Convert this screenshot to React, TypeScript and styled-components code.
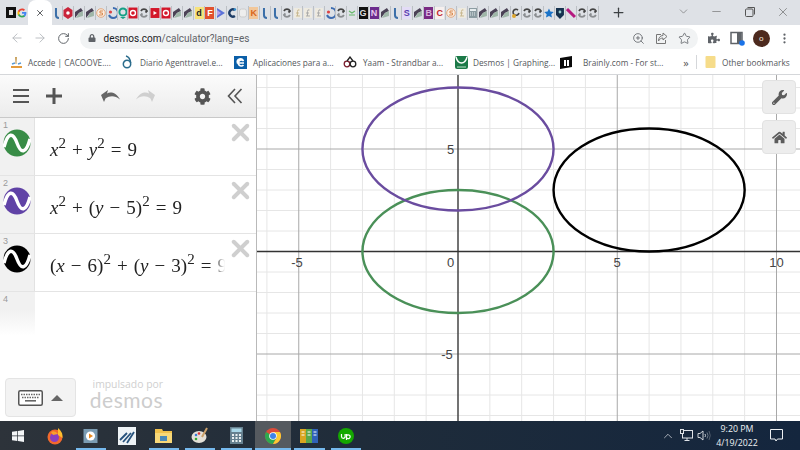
import React from "react";
import styled, { createGlobalStyle } from "styled-components";
import { ArrowLeft, ArrowRight, RotateCw, ZoomIn, Star, X, Minus, Plus, ChevronDown, ChevronUp, MoreVertical } from "lucide-react";
import { FaCog, FaWrench, FaHome, FaLock, FaPuzzlePiece } from "react-icons/fa";

const Global = createGlobalStyle`
  html, body { margin: 0; padding: 0; width: 800px; height: 450px; overflow: hidden; background: #fff; }
  * { box-sizing: border-box; }
`;

const Page = styled.div`
  width: 800px; height: 450px; display: flex; flex-direction: column;
  font-family: "Open Sans", "Liberation Sans", sans-serif; overflow: hidden;
`;

/* ---------- tab strip ---------- */
const TabStrip = styled.div`
  height: 25px; background: #dee1e6; display: flex; align-items: center; padding-left: 6px; flex: none;
`;
const FavSlot = styled.div<{ $sep?: boolean }>`
  width: 10.95px; height: 14px; flex: none; display: flex; align-items: center; justify-content: center;
  border-right: ${p => (p.$sep ? "1px solid #bcc0c5" : "none")};
`;
const ActiveTab = styled.div`
  width: 24px; height: 25px; background: #fff; border-radius: 8px 8px 0 0; display: flex;
  align-items: center; justify-content: center; color: #3c4043; flex: none; align-self: flex-end; margin-top: 0;
`;
const Badge = styled.span<{ $bg: string; $fg: string }>`
  width: 9px; height: 12px; background: ${p => p.$bg}; color: ${p => p.$fg};
  font: 700 9px/12px "Liberation Sans", sans-serif; text-align: center; display: block; overflow: hidden;
`;
const NewTab = styled.div`
  width: 24px; display: flex; justify-content: center; margin-left: 8px; color: #3c4043;
`;
const WindowControls = styled.div`
  margin-left: auto; display: flex; align-items: center; color: #5f6368; height: 100%; padding-bottom: 2px;
`;
const WinBtn = styled.div`
  width: 33.3px; display: flex; justify-content: center; color: #555;
`;

/* ---------- toolbar ---------- */
const Toolbar = styled.div`
  height: 25px; background: #fff; display: flex; align-items: center; flex: none; padding: 1px 0 0 5px;
`;
const NavBtn = styled.div<{ $off?: boolean }>`
  width: 23.5px; display: flex; justify-content: center; color: ${p => (p.$off ? "#b4b7bb" : "#5f6368")}; flex: none;
`;
const Omnibox = styled.div`
  margin-left: 4px; width: 618px; height: 21px; border-radius: 11px; background: #f1f3f4; display: flex; align-items: center;
  padding: 0 7px 0 8px; color: #5f6368; flex: none;
`;
const Url = styled.div`
  font: 400 10px "Roboto", sans-serif; color: #5f6368; margin-left: 8px;
  b { font-weight: 400; color: #202124; }
`;
const OmniActions = styled.div`
  margin-left: auto; display: flex; gap: 10px; align-items: center;
`;
const ToolbarRight = styled.div`
  display: flex; align-items: center; margin-left: 5px; color: #5f6368;
`;
const ExtBtn = styled.div`
  width: 23.5px; display: flex; justify-content: center; align-items: center;
`;
const Avatar = styled.div`
  width: 17px; height: 17px; border-radius: 50%; background: #4d2a1e; color: #f3e4da;
  font: 400 8px/17px "Roboto", sans-serif; text-align: center;
`;

/* ---------- bookmarks ---------- */
const Bookmarks = styled.div`
  height: 25px; background: #fff; border-bottom: 1px solid #d5d7da; display: flex; align-items: center; padding-left: 10px; flex: none;
`;
const Bookmark = styled.div<{ $w: number; $gap: number }>`
  width: ${p => p.$w}px; flex: none; display: flex; align-items: center; gap: ${p => p.$gap}px;
  font: 400 8.25px "Open Sans", sans-serif; color: #55585c; white-space: nowrap;
`;
const MoreMarks = styled.div`
  width: 20px; font: 400 11px "Open Sans", sans-serif; color: #555; text-align: center; flex: none; margin-left: 11px;
`;
const Sep = styled.div`
  width: 1px; height: 14px; background: #d5d7da; margin: 0 8px 0 0; flex: none;
`;

/* ---------- desmos ---------- */
const Main = styled.div`
  flex: 1; display: flex; min-height: 0;
`;
const Panel = styled.div`
  width: 257px; flex: none; background: #fff; border-right: 1px solid #b9b9b9; display: flex; flex-direction: column;
`;
const PanelHead = styled.div`
  height: 43px; flex: none; background: linear-gradient(#fbfbfb, #ececec); border-bottom: 1px solid #c9c9c9;
  display: flex; align-items: center; color: #555;
`;
const HeadBtn = styled.div<{ $w: number; $pad?: number }>`
  width: ${p => p.$w}px; flex: none; display: flex; justify-content: center; align-items: center; color: #555;
  padding-left: ${p => p.$pad || 0}px;
`;
const Row = styled.div`
  height: 58px; flex: none; display: flex; border-bottom: 1px solid #e4e4e4;
`;
const Gutter = styled.div`
  width: 35px; flex: none; background: #f1f1f1; border-right: 1px solid #e2e2e2; display: flex; flex-direction: column;
  align-items: center; position: relative; padding-top: 11px;
`;
const RowNum = styled.span`
  position: absolute; left: 3px; top: 2px; font: 400 9px "Liberation Sans", sans-serif; color: #9a9a9a;
`;
const MathText = styled.div`
  flex: 1; min-width: 0; overflow: hidden; white-space: nowrap; padding: 20px 0 0 15px; width: 190px;
  font: 400 19px/24px "Liberation Serif", "Times New Roman", serif; color: #222; word-spacing: 1.3px;
  -webkit-mask-image: linear-gradient(to right, #000 178px, transparent 190px);
  mask-image: linear-gradient(to right, #000 178px, transparent 190px);
  i { font-style: italic; }
  sup { font-size: 15px; line-height: 0; vertical-align: 8px; }
`;
const Close = styled.div`
  width: 30px; flex: none; padding: 1px 2px 0 0; color: #cfcfcf; display: flex; justify-content: center; align-items: flex-start;
`;
const LastRow = styled.div`
  height: 44px; flex: none; display: flex;
`;
const FadeGutter = styled(Gutter)`
  border-right-color: transparent;
  background: linear-gradient(#f1f1f1 40%, #fff);
`;
const PanelFoot = styled.div`
  margin-top: auto; display: flex; align-items: flex-start; padding: 0 0 4px 5px; gap: 14px;
`;
const KeyBtn = styled.div`
  width: 71px; height: 39px; background: #f3f3f3; border: 1px solid #e4e4e4; border-radius: 4px; display: flex;
  align-items: center; justify-content: center; gap: 8px; color: #555;
`;
const Caret = styled.span`
  width: 0; height: 0; border-left: 6px solid transparent; border-right: 6px solid transparent; border-bottom: 6px solid #666;
`;
const Powered = styled.div`
  display: flex; flex-direction: column; align-items: flex-end; width: 73px; color: #cfcfcf;
`;
const PoweredSmall = styled.span`
  font: 400 10.4px/13px "Open Sans", sans-serif; white-space: nowrap;
`;
const PoweredBig = styled.span`
  font: 400 21px/17px "Lato", sans-serif; letter-spacing: 0.5px; color: #cdcdcd;
`;
const Graph = styled.div`
  flex: 1; position: relative; min-width: 0; background: #fff; overflow: hidden;
  svg.plot { display: block; }
`;
const ToolBtn = styled.div<{ $top: number }>`
  position: absolute; right: 4px; top: ${p => p.$top}px; width: 34px; height: 34px; background: #ededed;
  border: 1px solid #e2e2e2; border-radius: 4px; display: flex; align-items: center; justify-content: center; color: #5c5c5c;
`;

/* ---------- taskbar ---------- */
const Taskbar = styled.div`
  height: 29px; flex: none; background: linear-gradient(to right, #2d333a, #1f2c3a 45%, #14263e); display: flex; align-items: stretch;
`;
const TaskSlot = styled.div<{ $active?: boolean; $open?: boolean }>`
  width: 36.4px; flex: none; position: relative; display: flex; align-items: center; justify-content: center;
  background: ${p => (p.$active ? "#555a5f" : "transparent")};
  &::after {
    content: ""; display: ${p => (p.$open ? "block" : "none")}; position: absolute; left: ${p => (p.$active ? 0 : 3)}px;
    right: ${p => (p.$active ? 0 : 3)}px; bottom: 0; height: 2px; background: #76b9ed;
  }
`;
const Tray = styled.div`
  margin-left: auto; display: flex; align-items: center; color: #dfe3e8;
`;
const TrayIcon = styled.div`
  width: 18px; display: flex; justify-content: center;
`;
const Clock = styled.div`
  width: 44px; margin-left: 2px; text-align: center; font: 400 8.8px/14px "Open Sans", sans-serif; color: #eef1f4; white-space: nowrap;
`;
const Notify = styled.div`
  width: 41px; display: flex; justify-content: center; padding-right: 7px;
`;

/* ---------- drawn icons ---------- */
const S = ({ w = 10, h = 12, children }: { w?: number; h?: number; children: React.ReactNode }) => (
  <svg width={w} height={h} viewBox={`0 0 ${w} ${h}`}>{children}</svg>
);
const Leaf = () => <S><path d="M1 11 L1 5 L7 1 L9 4 L5 6 Z" fill="#4b4256" /><path d="M5 6 L9 4 L9 9 L2 11 Z" fill="#9fb6a8" /></S>;
const Refresh = ({ c = "#444" }: { c?: string }) => <S><path d="M2 4 A3.4 3.4 0 0 1 8 4 L6.500 5.500" fill="none" stroke={c} strokeWidth="1.800" /><path d="M8 8 A3.4 3.4 0 0 1 2 8 L3.500 6.500" fill="none" stroke="#8a8d90" strokeWidth="1.800" /></S>;
const Bar = ({ c = "#3a6ea8" }: { c?: string }) => <S><path d="M4 1 v7 q0 3 3 3" fill="none" stroke={c} strokeWidth="2" /></S>;
const Fee = ({ c = "#c9b890" }: { c?: string }) => <S><rect x="1" y="1" width="8" height="10" fill="#eeeae0" /><path d="M6.5 3 q-2-1-2 1.5 v4.5 M3 6 h3 M3 9 h4" fill="none" stroke={c} strokeWidth="1" /></S>;
const Moon = () => <S><path d="M6 1 a5 5 0 0 1 0 10 a5 5 0 0 1 -4 -3" fill="none" stroke="#3d6cb0" strokeWidth="2" /><circle cx="3.5" cy="5" r="1.6" fill="#d44" /></S>;
const RedBox = () => <S><rect x="0.5" y="0.5" width="9" height="11" fill="#d3172a" /><circle cx="5" cy="6" r="2.5" fill="none" stroke="#fff" strokeWidth="1.4" /></S>;
const Hex = () => <S><path d="M5 0 L9.5 3 V9 L5 12 L.5 9 V3 Z" fill="#c9243a" /><circle cx="5" cy="6" r="1.8" fill="#fff" /></S>;
const SCoil = () => <S><circle cx="5" cy="6" r="4.3" fill="#fbeee2" stroke="#e3a77c" /><path d="M7 4 H4 V6 H6.5 V8 H3" fill="none" stroke="#d98a50" /></S>;
const Pin = () => <S><circle cx="5" cy="5" r="3.6" fill="none" stroke="#14a085" strokeWidth="2" /><path d="M2 10 h6 l-3 2z" fill="#14a085" /></S>;
const Play = () => <S><rect x="0.5" y="1" width="9" height="10" fill="#d3172a" /><path d="M3.5 4 L7 6 L3.5 8Z" fill="#fff" /></S>;
const PlayBlue = () => <S><path d="M1 1 L9 6 L1 11 Z" fill="#5b72d8" /><path d="M1 3 L5 6 L1 9 Z" fill="#b9a4ea" /></S>;
const Cee = () => <S><path d="M8 3 A3.6 3.6 0 1 0 8 9" fill="none" stroke="#1c3c66" strokeWidth="2.4" /><circle cx="8" cy="2.5" r="1.2" fill="#2f8fd0" /></S>;
const GreyBox = () => <S><rect x="1.5" y="2" width="7" height="8" rx="2" fill="#eee" stroke="#ccc" /></S>;
const Tiny = () => <S><path d="M2 4 l3 2 l3 -2 M2 8 h6" fill="none" stroke="#67b96a" strokeWidth="1.2" /></S>;
const Calc = () => <S><rect x="1" y="1" width="8" height="10" fill="#8a9aa0" /><rect x="2" y="2" width="6" height="2" fill="#e8eef0" /><path d="M2 6h6M2 8h6" stroke="#e8eef0" strokeDasharray="1 1" /></S>;
const RefY = () => <S><path d="M7 3 A3 3 0 1 0 8 6" fill="none" stroke="#444" strokeWidth="1.6" /><circle cx="3" cy="9" r="2" fill="#e0a72e" /></S>;
const StarB = () => <S><path d="M5 1.5 L6.4 4.6 L9.8 5 L7.3 7.2 L8 10.6 L5 8.9 L2 10.6 L2.7 7.2 L.2 5 L3.6 4.6Z" fill="#1a73c8" /></S>;
const Shield = () => <S><path d="M1 1 H9 V8 L5 12 L1 8Z" fill="#16324f" /><circle cx="5" cy="5" r="1.4" fill="#9cc" /></S>;
const Slash = () => <S><path d="M1 2 L9 10" stroke="#b51a80" strokeWidth="3" /></S>;

const favs: React.ReactNode[] = [
  <Bar />, <Hex />, <Leaf />, <Leaf />, <SCoil />, <Moon />, <Pin />, <RedBox />, <Refresh />, <Play />,
  <RedBox />, <Leaf />, <Leaf />, <Badge $bg="#f6e27a" $fg="#222">d</Badge>, <Badge $bg="#e2512d" $fg="#fff">F</Badge>,
  <PlayBlue />, <Cee />, <GreyBox />, <Badge $bg="#f2c79a" $fg="#d9661c">K</Badge>, <Bar />,
  <Bar />, <Refresh />, <Fee />, <Fee c="#aaa" />, <Fee c="#aaa" />, <Moon />, <Refresh />, <Tiny />,
  <Badge $bg="#111" $fg="#ddd">G</Badge>, <Badge $bg="#6b2a8c" $fg="#e7c6ee">N</Badge>, <Leaf />, <Bar />,
  <Badge $bg="#e3dcf6" $fg="#5a3db0">S</Badge>, <Leaf />, <Badge $bg="#7a2a83" $fg="#d9b6dd">B</Badge>,
  <Badge $bg="#f7f0ee" $fg="#c0262d">C</Badge>, <SCoil />, <Fee />, <Calc />, <Leaf />, <Leaf />, <Leaf />,
  <RefY />, <Refresh />, <Refresh />, <StarB />, <Shield />, <Slash />, <Refresh />, <Refresh />,
];

const GoogleG = () => (
  <svg width="10" height="10" viewBox="0 0 48 48">
    <path fill="#4285F4" d="M45 24c0-1.500-.1-3-.4-4.400H24v8.500h11.800c-.5 2.700-2 5-4.400 6.600v5.500h7C42.700 36 45 30.500 45 24z" />
    <path fill="#34A853" d="M24 46c5.900 0 10.900-2 14.500-5.300l-7-5.500c-2 1.300-4.500 2.100-7.400 2.100-5.700 0-10.500-3.800-12.300-9H4.500v5.600C8.100 41.100 15.500 46 24 46z" />
    <path fill="#FBBC05" d="M11.700 28.300c-.9-2.700-.9-5.800 0-8.500v-5.600H4.500c-3 6-3 13.700 0 19.700z" />
    <path fill="#EA4335" d="M24 10.700c3.200 0 6.100 1.100 8.300 3.300l6.200-6.200C34.900 4.100 29.900 2 24 2 15.500 2 8.100 6.900 4.500 14.200l7.200 5.600c1.800-5.300 6.600-9.100 12.300-9.100z" />
  </svg>
);

const SineIcon = ({ color }: { color: string }) => (
  <svg width="28" height="28" viewBox="0 0 28 28">
    <circle cx="14" cy="14" r="13.500" fill={color} />
    <path d="M1 18 C5 3 10 3 14 14 C18 25 23 25 27 10" fill="none" stroke="#fff" strokeWidth="3.400" />
  </svg>
);

const Hamburger = () => (
  <svg width="16" height="14" viewBox="0 0 16 14" fill="#555"><rect width="16" height="2" /><rect y="6" width="16" height="2" /><rect y="12" width="16" height="2" /></svg>
);
const BoldPlus = () => (
  <svg width="16" height="16" viewBox="0 0 16 16" fill="#555"><rect y="6.500" width="16" height="3" /><rect x="6.500" width="3" height="16" /></svg>
);
const Undo = ({ flip, c }: { flip?: boolean; c: string }) => (
  <svg width="20" height="13" viewBox="0 0 20 13" style={flip ? { transform: "scaleX(-1)" } : undefined}>
    <path d="M7 0 L0 5 L3 12 L4.500 8.500 C9 5.500 14 5.500 19 9.500 C15 2 9 1.500 6 3.500 Z" fill={c} />
  </svg>
);
const Chevrons = () => (
  <svg width="16" height="16" viewBox="0 0 16 16" fill="none" stroke="#555" strokeWidth="1.600">
    <path d="M8 1 L1.500 8 L8 15 M14.500 1 L8 8 L14.500 15" />
  </svg>
);
const Keyboard = () => (
  <svg width="25" height="16" viewBox="0 0 25 16">
    <rect x="0.750" y="0.750" width="23.500" height="14.500" rx="1.500" fill="#fff" stroke="#555" strokeWidth="1.500" />
    <path d="M3 4.500h19M4 7.500h17" stroke="#666" strokeWidth="1.300" strokeDasharray="1.500 1" />
    <rect x="7" y="10" width="11" height="1.600" fill="#666" />
  </svg>
);

const SideBarIcon = () => (
  <svg width="15" height="15" viewBox="0 0 15 15">
    <rect x="1" y="1.500" width="11" height="11" fill="none" stroke="#5f6368" strokeWidth="1.500" />
    <rect x="7" y="2" width="4.500" height="10" fill="#5f6368" />
    <circle cx="12" cy="12" r="2.800" fill="#1a73e8" />
  </svg>
);
const ShareIcon = () => (
  <svg width="13" height="13" viewBox="0 0 13 13" fill="none" stroke="#777" strokeWidth="1">
    <path d="M6 2.500H1.500V11.500H10.500V8" /><path d="M8 1 L12 4.500 L8 8 V6 C6 6 4.500 7 3.500 9 C3.500 6 5 3.500 8 3.500Z" />
  </svg>
);
const Folder = () => (
  <svg width="11" height="14" viewBox="0 0 11 14"><rect x="0.500" y="1" width="10" height="12" rx="1" fill="#f6dc8a" /></svg>
);

const BmAccede = () => (
  <svg width="13" height="13" viewBox="0 0 13 13">
    <path d="M5 1 L7 1 L6.500 8 L5.500 8Z" fill="#c9a25e" /><path d="M1 11h11" stroke="#e39a3c" strokeWidth="2" /><path d="M2 8 l3 -1 M11 7 l-3 1" stroke="#5a9bd5" strokeWidth="1.500" />
  </svg>
);
const BmD = () => (
  <svg width="10" height="14" viewBox="0 0 10 14" fill="none" stroke="#2b6c8c" strokeWidth="1.500">
    <circle cx="5" cy="9" r="3.700" /><path d="M4 1 Q8 2 8.700 8" />
  </svg>
);
const BmE = () => (
  <svg width="13" height="13" viewBox="0 0 13 13"><rect width="13" height="13" fill="#0b5fa8" /><path d="M10 7H3.500 A3 3 0 0 1 9.500 5 A3 3 0 1 0 9.500 9" fill="none" stroke="#fff" strokeWidth="1.600" /></svg>
);
const BmY = () => (
  <svg width="14" height="12" viewBox="0 0 14 12" fill="none" stroke="#7a1c2c" strokeWidth="1.300">
    <circle cx="4" cy="8" r="2.800" /><circle cx="10" cy="8" r="2.800" stroke="#222" /><path d="M4 5 L7 1 L10 5" stroke="#222" />
  </svg>
);
const BmDesmos = () => (
  <svg width="13" height="13" viewBox="0 0 13 13"><rect width="13" height="13" rx="2" fill="#1c7a48" /><path d="M1 1 C3 9 10 9 12 1" fill="none" stroke="#fff" strokeWidth="1.400" /><path d="M2 11 h9" stroke="#bfe3cc" /></svg>
);
const BmBrainly = () => (
  <svg width="14" height="13" viewBox="0 0 14 13"><path d="M1 2 L13 0 V11 L1 13Z" fill="#0a0a0a" /><path d="M5 4h2v6H5zM8 4h2v6H8z" fill="#fff" /></svg>
);

/* taskbar icons */
const WinLogo = () => (
  <svg width="12" height="12" viewBox="0 0 12 12" fill="#f4f6f8"><path d="M0 1.700 L5.300 1 V5.600 H0Z M6 .9 L12 0 V5.600 H6Z M0 6.300 H5.300 V11 L0 10.300Z M6 6.300 H12 V12 L6 11.100Z" /></svg>
);
const Firefox = () => (
  <svg width="18" height="18" viewBox="0 0 18 18">
    <circle cx="9" cy="10" r="7.500" fill="#f2692d" /><circle cx="8.500" cy="10.500" r="4.500" fill="#8a3fc0" /><path d="M12 1 Q17 5 16.500 11 L12 8Z" fill="#ffbd2e" /><path d="M5 5 Q9 3 12 7 L7 8Z" fill="#f9a02e" />
  </svg>
);
const Media = () => (
  <svg width="15" height="16" viewBox="0 0 15 16"><rect x="0.500" y="1" width="14" height="14" fill="#7b9cb3" /><circle cx="7.500" cy="8" r="4.600" fill="#fff" /><path d="M6 5.500 L10 8 L6 10.500Z" fill="#e8891f" /></svg>
);
const Stocks = () => (
  <svg width="18" height="18" viewBox="0 0 18 18"><rect width="18" height="18" fill="#eef3f6" /><path d="M2 13 L9 6 M5 15 L13 6 M9 16 L16 5" stroke="#27527c" strokeWidth="1.800" /></svg>
);
const Explorer = () => (
  <svg width="17" height="15" viewBox="0 0 17 15"><path d="M0 1 H7 L8 3 H17 V15 H0Z" fill="#f1c14c" /><rect x="0" y="5" width="17" height="10" fill="#f8d878" /><rect x="5" y="8" width="7" height="5" fill="#4a88b8" /></svg>
);
const Paint = () => (
  <svg width="18" height="17" viewBox="0 0 18 17"><ellipse cx="8" cy="10" rx="7.500" ry="6" fill="#e4e0d8" /><circle cx="5" cy="8" r="1.300" fill="#3a7bd5" /><circle cx="8" cy="6.500" r="1.300" fill="#d33" /><circle cx="5" cy="12" r="1.300" fill="#3a3" /><path d="M11 10 L16 1" stroke="#caa06a" strokeWidth="2" /></svg>
);
const CalcApp = () => (
  <svg width="13" height="17" viewBox="0 0 13 17"><rect width="13" height="17" fill="#66808f" /><rect x="1.500" y="1.500" width="10" height="3.500" fill="#a9d7e8" /><path d="M2 8 h9 M2 11 h9 M2 14 h9" stroke="#e8eef0" strokeWidth="2" strokeDasharray="2 1.500" /></svg>
);
const ChromeLogo = () => (
  <svg width="16" height="16" viewBox="0 0 16 16">
    <circle cx="8" cy="8" r="8" fill="#dd4b39" />
    <path d="M8 8 L1.070 4 A8 8 0 0 0 8 16 L12 9Z" fill="#2da94f" />
    <path d="M8 4 H14.930 A8 8 0 0 1 8 16 L12 9Z" fill="#fcc934" />
    <circle cx="8" cy="8" r="3.800" fill="#fff" /><circle cx="8" cy="8" r="3" fill="#3f83ea" />
  </svg>
);
const Books = () => (
  <svg width="18" height="14" viewBox="0 0 18 14"><rect width="6" height="14" fill="#d9a520" /><rect x="6" width="6" height="14" fill="#5aa84a" /><rect x="12" width="6" height="14" fill="#2f62b8" /><path d="M1.500 3h3M1.500 6h3M7.500 3h3M7.500 6h3M13.500 3h3M13.500 6h3" stroke="#fff" /></svg>
);
const Upwork = () => (
  <svg width="16" height="16" viewBox="0 0 16 16"><circle cx="8" cy="8" r="8" fill="#14a800" /><path d="M3.500 6 V8.500 a1.800 1.800 0 0 0 3.600 0 V6 M8.500 6 V12 M8.500 8 a1.900 1.900 0 1 1 0 1.500" fill="none" stroke="#fff" strokeWidth="1.200" /></svg>
);
const NetIcon = () => (
  <svg width="13" height="13" viewBox="0 0 13 13" fill="none" stroke="#dfe3e8"><rect x="2.500" y="1.500" width="10" height="7.500" /><path d="M7 9 V11.500 M4.500 11.500 H9.500" /><rect x="0.500" y="0.500" width="3" height="4" fill="#1f2c3a" /></svg>
);
const Speaker = () => (
  <svg width="14" height="13" viewBox="0 0 14 13" fill="none" stroke="#dfe3e8" strokeWidth="0.900">
    <path d="M1 4.500 H3 L6 2 V11 L3 8.500 H1Z" /><path d="M8 5 Q9 6.500 8 8" /><path d="M10 3.500 Q12 6.500 10 9.500" stroke="#7a8794" /><path d="M12 2 Q14.500 6.500 12 11" stroke="#5a6774" />
  </svg>
);
const NotifyIcon = () => (
  <svg width="13" height="13" viewBox="0 0 13 13" fill="none" stroke="#eef1f4"><path d="M.5 .5 H12.500 V10 H7.500 L6 12 L5 10 H.5Z" /></svg>
);

/* plot */
const X0 = 458, UX = 31.85, Y0 = 251.5, UY = 20.5;
const px = (v: number) => X0 + v * UX;
const py = (v: number) => Y0 - v * UY;
const xs = Array.from({ length: 18 }, (_, i) => i - 7);
const ys = Array.from({ length: 18 }, (_, i) => i - 8);

const Plot = () => (
  <svg className="plot" width="543" height="346" viewBox="257 75 543 346">
    {xs.filter(v => v % 5 !== 0).map(v => <line key={v} x1={px(v)} x2={px(v)} y1="75" y2="421" stroke="#e6e6e6" />)}
    {ys.filter(v => v % 5 !== 0).map(v => <line key={v} y1={py(v)} y2={py(v)} x1="257" x2="800" stroke="#e6e6e6" />)}
    {[-5, 5, 10].map(v => <line key={v} x1={px(v)} x2={px(v)} y1="75" y2="421" stroke="#a8a8a8" />)}
    {[-5, 5, 10].map(v => <line key={v} y1={py(v)} y2={py(v)} x1="257" x2="800" stroke="#a8a8a8" />)}
    <line x1={X0} x2={X0} y1="75" y2="421" stroke="#444" strokeWidth="1.500" />
    <line y1={Y0} y2={Y0} x1="257" x2="800" stroke="#333" strokeWidth="1.500" />
    <g fill="none" strokeWidth="2.400">
      <ellipse cx={px(0)} cy={py(0)} rx={3 * UX} ry={3 * UY} stroke="#4a9058" />
      <ellipse cx={px(0)} cy={py(5)} rx={3 * UX} ry={3 * UY} stroke="#6a4c9f" />
      <ellipse cx={px(6)} cy={py(3)} rx={3 * UX} ry={3 * UY} stroke="#000" />
    </g>
    <g fontFamily="'Liberation Sans', Arial, sans-serif" fontSize="13" fill="#444">
      <text x="297" y="267" textAnchor="middle">-5</text>
      <text x="450.500" y="267" textAnchor="middle">0</text>
      <text x="617" y="267" textAnchor="middle">5</text>
      <text x="776.500" y="267" textAnchor="middle">10</text>
      <text x="450.500" y="154" textAnchor="middle">5</text>
      <text x="447" y="358.500" textAnchor="middle">-5</text>
    </g>
  </svg>
);

const exprs: { color: string; math: React.ReactNode }[] = [
  { color: "#388c46", math: <><i>x</i><sup>2</sup> + <i>y</i><sup>2</sup> = 9</> },
  { color: "#6042a6", math: <><i>x</i><sup>2</sup> + (<i>y</i> − 5)<sup>2</sup> = 9</> },
  { color: "#000", math: <>(<i>x</i> − 6)<sup>2</sup> + (<i>y</i> − 3)<sup>2</sup> = 9</> },
];

const marks = [
  { w: 112, gap: 5, icon: <BmAccede />, label: "Accede | CACOOVE...." },
  { w: 112, gap: 8, icon: <BmD />, label: "Diario Agenttravel.e..." },
  { w: 109, gap: 6, icon: <BmE />, label: "Aplicaciones para a..." },
  { w: 112, gap: 6, icon: <BmY />, label: "Yaam - Strandbar a..." },
  { w: 104, gap: 5, icon: <BmDesmos />, label: "Desmos | Graphing..." },
  { w: 106, gap: 10, icon: <BmBrainly />, label: "Brainly.com - For st..." },
];

const task: { icon: React.ReactNode; open?: boolean; active?: boolean }[] = [
  { icon: <WinLogo /> }, { icon: <Firefox /> }, { icon: <Media />, open: true }, { icon: <Stocks /> },
  { icon: <Explorer />, open: true }, { icon: <Paint />, open: true }, { icon: <CalcApp />, open: true },
  { icon: <ChromeLogo />, open: true, active: true }, { icon: <Books />, open: true }, { icon: <Upwork />, open: true },
];

export default function App() {
  return (
    <Page>
      <Global />
      <TabStrip>
        <FavSlot><svg width="10" height="11" viewBox="0 0 10 11"><rect width="10" height="11" fill="#111" /><rect x="3" y="3" width="4" height="5" fill="#ddd" /></svg></FavSlot>
        <FavSlot><GoogleG /></FavSlot>
        <ActiveTab><X size={10} strokeWidth={2} /></ActiveTab>
        {favs.map((f, i) => <FavSlot key={i} $sep>{f}</FavSlot>)}
        <NewTab><Plus size={15} strokeWidth={2} /></NewTab>
        <WindowControls>
          <WinBtn><ChevronDown size={13} strokeWidth={1} /></WinBtn>
          <WinBtn><Minus size={13} strokeWidth={1} /></WinBtn>
          <WinBtn><svg width="10" height="10" viewBox="0 0 10 10" fill="none" stroke="#555"><rect x="0.500" y="2" width="7.500" height="7.500" rx="1" /><path d="M2.500 .5 H9.500 V7.500" /></svg></WinBtn>
          <WinBtn><X size={14} strokeWidth={1} /></WinBtn>
        </WindowControls>
      </TabStrip>
      <Toolbar>
        <NavBtn $off><ArrowLeft size={14} strokeWidth={1.500} /></NavBtn>
        <NavBtn $off><ArrowRight size={14} strokeWidth={1.500} /></NavBtn>
        <NavBtn><RotateCw size={13} strokeWidth={1.800} /></NavBtn>
        <Omnibox>
          <FaLock size={8} />
          <Url><b>desmos.com</b>/calculator?lang=es</Url>
          <OmniActions>
            <ZoomIn size={13} strokeWidth={1.500} />
            <ShareIcon />
            <Star size={13} strokeWidth={1.500} />
          </OmniActions>
        </Omnibox>
        <ToolbarRight>
          <ExtBtn><FaPuzzlePiece size={12} /></ExtBtn>
          <ExtBtn><SideBarIcon /></ExtBtn>
          <ExtBtn><Avatar>o</Avatar></ExtBtn>
          <ExtBtn><MoreVertical size={13} strokeWidth={2.200} /></ExtBtn>
        </ToolbarRight>
      </Toolbar>
      <Bookmarks>
        {marks.map(m => <Bookmark key={m.label} $w={m.w} $gap={m.gap}>{m.icon}{m.label}</Bookmark>)}
        <MoreMarks>»</MoreMarks>
        <Sep />
        <Bookmark $w={90} $gap={6}><Folder />Other bookmarks</Bookmark>
      </Bookmarks>
      <Main>
        <Panel>
          <PanelHead>
            <HeadBtn $w={42}><Hamburger /></HeadBtn>
            <HeadBtn $w={24}><BoldPlus /></HeadBtn>
            <HeadBtn $w={60} $pad={30}><Undo c="#666" /></HeadBtn>
            <HeadBtn $w={38}><Undo flip c="#cfcfcf" /></HeadBtn>
            <HeadBtn $w={50} $pad={26}><FaCog size={17} /></HeadBtn>
            <HeadBtn $w={42}><Chevrons /></HeadBtn>
          </PanelHead>
          {exprs.map((e, i) => (
            <Row key={i}>
              <Gutter><RowNum>{i + 1}</RowNum><SineIcon color={e.color} /></Gutter>
              <MathText>{e.math}</MathText>
              <Close><X size={27} strokeWidth={3.500} /></Close>
            </Row>
          ))}
          <LastRow><FadeGutter><RowNum>4</RowNum></FadeGutter></LastRow>
          <PanelFoot>
            <KeyBtn><Keyboard /><Caret /></KeyBtn>
            <Powered>
              <PoweredSmall>impulsado por</PoweredSmall>
              <PoweredBig>desmos</PoweredBig>
            </Powered>
          </PanelFoot>
        </Panel>
        <Graph>
          <Plot />
          <ToolBtn $top={5}><FaWrench size={15} /></ToolBtn>
          <ToolBtn $top={45}><FaHome size={15} /></ToolBtn>
        </Graph>
      </Main>
      <Taskbar>
        {task.map((t, i) => <TaskSlot key={i} $open={t.open} $active={t.active}>{t.icon}</TaskSlot>)}
        <Tray>
          <TrayIcon><ChevronUp size={14} strokeWidth={1.200} /></TrayIcon>
          <TrayIcon><NetIcon /></TrayIcon>
          <TrayIcon><Speaker /></TrayIcon>
          <Clock>9:20 PM<br />4/19/2022</Clock>
          <Notify><NotifyIcon /></Notify>
        </Tray>
      </Taskbar>
    </Page>
  );
}
